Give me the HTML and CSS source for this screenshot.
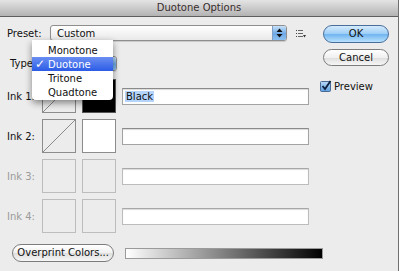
FILE: index.html
```html
<!DOCTYPE html>
<html lang="en">
<head>
  <meta charset="UTF-8">
  <title>Duotone Options</title>
  <link rel="stylesheet" href="styles.css">
</head>
<body>
  <div class="window">
    <div class="titlebar">Duotone Options</div>
    <div class="content">
      <div class="main">
        <div class="row preset-row">
          <span class="label preset-label">Preset:</span>
          <div class="select preset-select">
            <span class="select-text">Custom</span>
            <span class="arrows">
              <svg width="7" height="10" viewBox="0 0 7 10"><path d="M3.5 0.5 L6.5 4 H0.5 Z M3.5 9.5 L6.5 6 H0.5 Z" fill="#111"/></svg>
            </span>
          </div>
          <svg class="list-icon" width="10" height="8" viewBox="0 0 10 8">
            <rect x="0" y="0" width="1" height="1" fill="#444"/>
            <rect x="2" y="0" width="5" height="1" fill="#666"/>
            <rect x="0" y="3" width="1" height="1" fill="#444"/>
            <rect x="2" y="3" width="5" height="1" fill="#666"/>
            <rect x="0" y="6" width="1" height="1" fill="#444"/>
            <rect x="2" y="6" width="5" height="1" fill="#666"/>
            <path d="M7 5 H10 L8.5 7.5 Z" fill="#333"/>
          </svg>
        </div>

        <div class="row type-row">
          <span class="label type-label">Type:</span>
          <div class="select type-select">
            <span class="select-text">Duotone</span>
            <span class="arrows"></span>
          </div>
        </div>

        <div class="ink">
          <span class="label ink-label">Ink 1:</span>
          <div class="swatch curve"></div>
          <div class="swatch black"></div>
          <div class="field"><span class="selected">Black</span></div>
        </div>
        <div class="ink">
          <span class="label ink-label">Ink 2:</span>
          <div class="swatch curve"></div>
          <div class="swatch white"></div>
          <div class="field"></div>
        </div>
        <div class="ink disabled">
          <span class="label ink-label">Ink 3:</span>
          <div class="swatch"></div>
          <div class="swatch"></div>
          <div class="field"></div>
        </div>
        <div class="ink disabled">
          <span class="label ink-label">Ink 4:</span>
          <div class="swatch"></div>
          <div class="swatch"></div>
          <div class="field"></div>
        </div>

        <div class="row bottom-row">
          <div class="pill overprint">Overprint Colors...</div>
          <div class="ramp"></div>
        </div>
      </div>

      <div class="side">
        <div class="pill ok">OK</div>
        <div class="pill cancel">Cancel</div>
        <div class="preview">
          <svg class="check" width="12" height="12" viewBox="0 0 12 12">
            <defs>
              <linearGradient id="cb" x1="0" y1="0" x2="0" y2="1">
                <stop offset="0" stop-color="#b9d9f6"/>
                <stop offset="1" stop-color="#5d9ee0"/>
              </linearGradient>
            </defs>
            <rect x="0.5" y="1.5" width="10" height="10" rx="1" fill="url(#cb)" stroke="#4a6a94"/>
            <path d="M2.5 6 L5 9 L10.5 1" fill="none" stroke="#0d1f3c" stroke-width="1.8"/>
          </svg>
          <span>Preview</span>
        </div>
      </div>
    </div>

    <ul class="menu">
      <li>Monotone</li>
      <li class="active"><span class="tick">✓</span>Duotone</li>
      <li>Tritone</li>
      <li>Quadtone</li>
    </ul>
  </div>
</body>
</html>
```

FILE: styles.css
```css
body {
  margin: 0;
  background-color: #fff;
  font-family: "DejaVu Sans", Verdana, sans-serif;
  font-size: 10px;
  color: #111;
}
.window {
  position: relative;
  width: 398px;
  height: 271px;
  border-right: 1px solid #6f6f6f;
  background-color: #ececec;
  overflow: hidden;
}
.titlebar {
  height: 16px;
  line-height: 16px;
  text-align: center;
  color: #3a2c2c;
  background: linear-gradient(#e4e4e4, #b3b3b3);
  border-bottom: 1px solid #5e5e5e;
}
.content {
  display: flex;
}
.main {
  width: 323px;
  padding-left: 7px;
  box-sizing: border-box;
}
.row {
  display: flex;
  align-items: center;
}
.label {
  flex: none;
}
.preset-row {
  margin-top: 8px;
  height: 16px;
}
.preset-label {
  width: 43px;
}
.select {
  display: flex;
  align-items: center;
  justify-content: space-between;
  box-sizing: border-box;
  border: 1px solid #8e8e8e;
  border-radius: 3px;
  background: linear-gradient(#ffffff, #e9e9e9);
  box-shadow: 0 1px 1px rgba(0, 0, 0, 0.15);
}
.preset-select {
  width: 237px;
  height: 16px;
}
.select-text {
  padding-left: 6px;
}
.arrows {
  width: 13px;
  height: 14px;
  display: flex;
  align-items: center;
  justify-content: center;
  border-radius: 0 2px 2px 0;
  background: linear-gradient(#c7e1f9, #6fa9e6 55%, #8cc0f2);
  border-left: 1px solid #7f9fc6;
}
.list-icon {
  margin-left: 9px;
  margin-top: 1px;
}
.type-row {
  margin-top: 15px;
  height: 15px;
}
.type-label {
  margin-left: 3px;
  width: 30px;
}
.type-select {
  width: 77px;
  height: 15px;
}
.type-select .arrows {
  height: 13px;
}
.ink {
  display: flex;
  align-items: center;
  gap: 6px;
  height: 34px;
  margin-top: 6px;
}
.type-row + .ink {
  margin-top: 8px;
}
.ink-label {
  width: 29px;
}
.swatch {
  width: 34px;
  height: 34px;
  box-sizing: border-box;
  border: 1px solid #8c8c8c;
  background-color: #ececec;
}
.swatch.curve {
  background: linear-gradient(to bottom right, transparent calc(50% - 0.6px), #8a8a8a 50%, transparent calc(50% + 0.6px)), #ececec;
}
.swatch.black {
  background-color: #000;
  border-color: #555;
}
.swatch.white {
  background-color: #fff;
}
.field {
  width: 187px;
  height: 17px;
  box-sizing: border-box;
  border: 1px solid #a3a3a3;
  border-top-color: #8a8a8a;
  box-shadow: inset 0 1px 1px rgba(0, 0, 0, 0.15);
  background-color: #fff;
  padding: 1px 2px;
  line-height: 13px;
}
.selected {
  background-color: #b4d4fc;
  padding: 0 1px;
}
.disabled .label {
  color: #9a9a9a;
}
.disabled .swatch {
  border-color: #bdbdbd;
}
.disabled .field {
  border-color: #bcbcbc;
  border-top-color: #a8a8a8;
}
.bottom-row {
  margin-top: 11px;
  padding-left: 5px;
}
.pill {
  box-sizing: border-box;
  border: 1px solid #7c7c7c;
  border-radius: 9px;
  background: linear-gradient(#ffffff, #f0f0f0 50%, #dedede 51%, #f6f6f6);
  text-align: center;
}
.overprint {
  width: 104px;
  height: 18px;
  line-height: 16px;
}
.ramp {
  margin-left: 11px;
  width: 201px;
  height: 11px;
  box-sizing: border-box;
  border: 1px solid #9a9a9a;
  background: linear-gradient(to right, #fff, #000);
}
.side {
  width: 66px;
  display: flex;
  flex-direction: column;
}
.ok {
  margin-top: 8px;
  height: 18px;
  line-height: 16px;
  border-color: #4a6e9c;
  background: linear-gradient(#d4ebfc, #9ccdf6 50%, #6fb3ef 51%, #b8e2fd);
}
.cancel {
  margin-top: 6px;
  height: 17px;
  line-height: 15px;
}
.preview {
  display: flex;
  align-items: center;
  gap: 2px;
  margin-top: 14px;
  margin-left: -3px;
}
.menu {
  position: absolute;
  left: 32px;
  top: 40px;
  width: 81px;
  margin: 0;
  padding: 3px 0 1px;
  list-style: none;
  background-color: #fff;
  border-radius: 0 0 4px 4px;
  box-shadow: 0 3px 7px rgba(0, 0, 0, 0.45);
}
.menu li {
  height: 14px;
  line-height: 15px;
  padding-left: 16px;
  position: relative;
}
.menu li.active {
  color: #fff;
  background: linear-gradient(#6a8ef1, #2b5ce6);
}
.tick {
  position: absolute;
  left: 3px;
  font-size: 12px;
  font-weight: bold;
}
```
